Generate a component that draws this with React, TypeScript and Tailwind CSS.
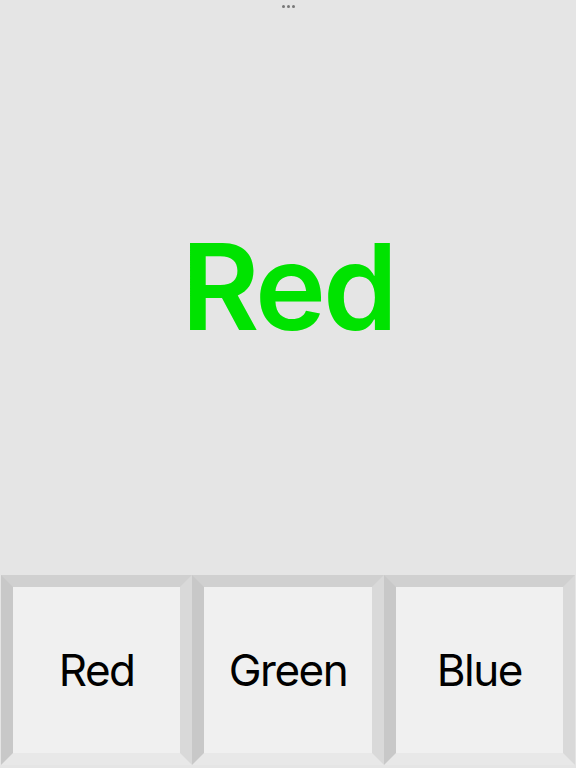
const options = ['Red', 'Green', 'Blue'];

export default function App() {
  return (
    <div
      className="flex h-screen w-full flex-col bg-[#e5e5e5]"
      style={{ fontFamily: 'Inter, "Liberation Sans", Arial, sans-serif' }}
    >
      <div className="flex justify-center gap-[2px] pt-[5px]">
        <span className="h-[3px] w-[3px] rounded-full bg-[#777]" />
        <span className="h-[3px] w-[3px] rounded-full bg-[#777]" />
        <span className="h-[3px] w-[3px] rounded-full bg-[#777]" />
      </div>
      <div className="flex flex-1 items-center justify-center pb-[10px]">
        <span className="text-[120px] leading-none font-semibold tracking-[-3px] text-[#00e300]">Red</span>
      </div>
      <div className="grid grid-cols-3 px-[1px] pb-[3px]">
        {options.map((label) => (
          <button
            key={label}
            className="flex h-[190px] items-center justify-center border-[12px] border-t-[#d0d0d0] border-l-[#c8c8c8] border-r-[#d9d9d9] border-b-[#e8e8e8] bg-[#f0f0f0] text-[44px] tracking-[-1.5px] text-black"
          >
            {label}
          </button>
        ))}
      </div>
    </div>
  );
}
